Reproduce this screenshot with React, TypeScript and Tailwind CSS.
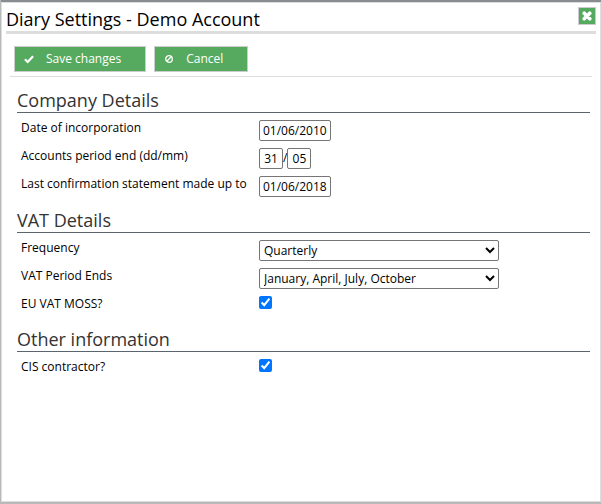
import React, { useState } from "react";

const inputClass =
  "h-[21px] rounded-[2px] border border-[#767676] bg-white px-[3px] text-[12px] leading-4 text-black";

const selectClass =
  "h-[21px] w-60 rounded-[2px] border border-[#767676] bg-white text-[12px] text-black";

const buttonClass =
  "flex h-[26px] items-center border border-[#ccc] bg-[#56aa60] text-[12px] text-white hover:bg-[#478f50]";

function CheckIcon() {
  return (
    <svg width="10" height="10" viewBox="0 0 10 10" aria-hidden="true">
      <path d="M0.9 5.2 3.7 8 9.1 2.2" fill="none" stroke="currentColor" strokeWidth="2.2" />
    </svg>
  );
}

function BanIcon() {
  return (
    <svg width="8" height="8" viewBox="0 0 8 8" aria-hidden="true">
      <circle cx="4" cy="4" r="3.3" fill="none" stroke="currentColor" strokeWidth="1.3" />
      <path d="M6.2 1.8 1.8 6.2" stroke="currentColor" strokeWidth="1.3" />
    </svg>
  );
}

function CloseIcon() {
  return (
    <svg width="10" height="10" viewBox="0 0 10 10" aria-hidden="true">
      <path
        d="M2.2 2.2 7.8 7.8M7.8 2.2 2.2 7.8"
        stroke="currentColor"
        strokeWidth="3.6"
        strokeLinecap="round"
      />
    </svg>
  );
}

function Section({ title, children }: { title: string; children: React.ReactNode }) {
  return (
    <section>
      <h2 className="border-b border-[#5a6570] pt-1 text-[18px] leading-6 text-[#333]">{title}</h2>
      <div className="pt-[7px] pl-1">{children}</div>
    </section>
  );
}

function Row({
  label,
  htmlFor,
  children,
}: {
  label: string;
  htmlFor: string;
  children: React.ReactNode;
}) {
  return (
    <div className="flex items-start pb-[7px]">
      <label htmlFor={htmlFor} className="w-[238px] shrink-0 text-[12px] leading-4">
        {label}
      </label>
      <div className="flex min-h-5 min-w-0 items-start">{children}</div>
    </div>
  );
}

export default function App() {
  const [incorporated, setIncorporated] = useState("01/06/2010");
  const [endDay, setEndDay] = useState("31");
  const [endMonth, setEndMonth] = useState("05");
  const [confirmation, setConfirmation] = useState("01/06/2018");
  const [frequency, setFrequency] = useState("Quarterly");
  const [periodEnds, setPeriodEnds] = useState("January, April, July, October");
  const [moss, setMoss] = useState(true);
  const [cis, setCis] = useState(true);

  return (
    <div className="flex min-h-screen flex-col bg-[#b9b9b9] pb-0.5 pl-px font-['Open_Sans','Liberation_Sans',sans-serif] text-black">
      <div className="h-0.5 bg-[#888b90]" />
      <main className="flex-1 border border-[#ddd] bg-white">
        <header className="mx-1 flex items-start justify-between border-b-[3px] border-[#ddd] pt-1">
          <h1 className="text-[18px] leading-6">Diary Settings - Demo Account</h1>
          <button
            type="button"
            aria-label="Close"
            className="flex size-[18px] items-center justify-center border border-[#ccc] bg-[#56aa60] text-white"
          >
            <CloseIcon />
          </button>
        </header>

        <form onSubmit={(e) => e.preventDefault()}>
          <div className="mx-2 flex gap-2 border-b border-[#ddd] px-1 pt-3 pb-1">
            <button type="submit" className={`${buttonClass} gap-3 pr-6 pl-[9px]`}>
              <CheckIcon />
              Save changes
            </button>
            <button type="button" className={`${buttonClass} gap-[13px] pr-6 pl-[10px]`}>
              <BanIcon />
              Cancel
            </button>
          </div>

          <div className="pt-[7px] pr-[10px] pl-[15px]">
            <Section title="Company Details">
              <Row label="Date of incorporation" htmlFor="incorporated">
                <input
                  id="incorporated"
                  className={`${inputClass} w-[72px]`}
                  value={incorporated}
                  onChange={(e) => setIncorporated(e.target.value)}
                />
              </Row>
              <Row label="Accounts period end (dd/mm)" htmlFor="end-day">
                <input
                  id="end-day"
                  className={`${inputClass} w-6 text-center`}
                  value={endDay}
                  onChange={(e) => setEndDay(e.target.value)}
                />
                <span className="text-[12px] leading-5">/</span>
                <input
                  aria-label="Accounts period end month"
                  className={`${inputClass} w-6 text-center`}
                  value={endMonth}
                  onChange={(e) => setEndMonth(e.target.value)}
                />
              </Row>
              <Row label="Last confirmation statement made up to" htmlFor="confirmation">
                <input
                  id="confirmation"
                  className={`${inputClass} w-[72px]`}
                  value={confirmation}
                  onChange={(e) => setConfirmation(e.target.value)}
                />
              </Row>
            </Section>

            <Section title="VAT Details">
              <Row label="Frequency" htmlFor="frequency">
                <select
                  id="frequency"
                  className={selectClass}
                  value={frequency}
                  onChange={(e) => setFrequency(e.target.value)}
                >
                  <option>Monthly</option>
                  <option>Quarterly</option>
                  <option>Annually</option>
                </select>
              </Row>
              <Row label="VAT Period Ends" htmlFor="period-ends">
                <select
                  id="period-ends"
                  className={selectClass}
                  value={periodEnds}
                  onChange={(e) => setPeriodEnds(e.target.value)}
                >
                  <option>January, April, July, October</option>
                  <option>February, May, August, November</option>
                  <option>March, June, September, December</option>
                </select>
              </Row>
              <Row label="EU VAT MOSS?" htmlFor="moss">
                <input
                  id="moss"
                  type="checkbox"
                  className="size-[13px]"
                  checked={moss}
                  onChange={(e) => setMoss(e.target.checked)}
                />
              </Row>
            </Section>

            <Section title="Other information">
              <Row label="CIS contractor?" htmlFor="cis">
                <input
                  id="cis"
                  type="checkbox"
                  className="size-[13px]"
                  checked={cis}
                  onChange={(e) => setCis(e.target.checked)}
                />
              </Row>
            </Section>
          </div>
        </form>
      </main>
    </div>
  );
}
